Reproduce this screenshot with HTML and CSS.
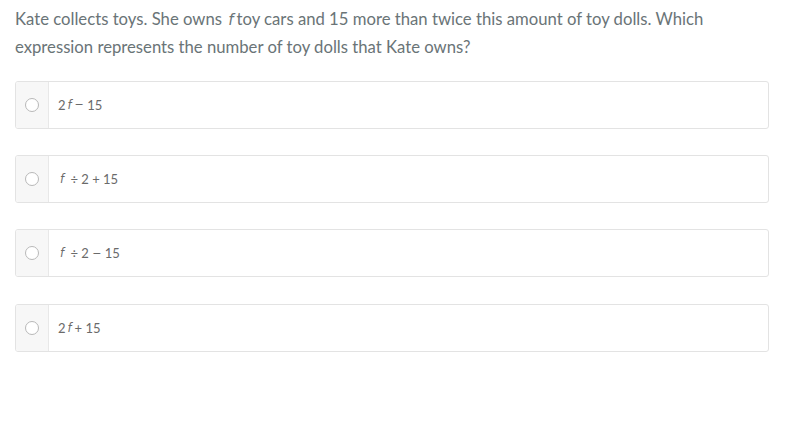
FILE: index.html
```html
<!DOCTYPE html>
<html>
<head>
<meta charset="utf-8">
<link rel="stylesheet" href="styles.css">
</head>
<body>
<div class="page">
  <p class="question">Kate collects toys. She owns <span class="var">f</span>toy cars and 15 more than twice this amount of toy dolls. Which expression represents the number of toy dolls that Kate owns?</p>
  <div class="choices">
    <div class="choice"><div class="radio-cell"><span class="radio"></span></div><div class="label">2<span class="var">f</span><span class="op">−</span> 15</div></div>
    <div class="choice"><div class="radio-cell"><span class="radio"></span></div><div class="label"><span class="var">f</span> ÷ 2 + 15</div></div>
    <div class="choice"><div class="radio-cell"><span class="radio"></span></div><div class="label"><span class="var">f</span> ÷ 2 <span class="op">−</span> 15</div></div>
    <div class="choice"><div class="radio-cell"><span class="radio"></span></div><div class="label">2<span class="var">f</span>+ 15</div></div>
  </div>
</div>
</body>
</html>
```

FILE: styles.css
```css
html, body {
  margin: 0;
  padding: 0;
  background: #ffffff;
}
.page {
  padding: 6px 31px 0 15px;
  font-family: "Lato", "Noto Sans", sans-serif;
  color: #6a7477;
}
.question {
  margin: 0;
  font-size: 16.7px;
  line-height: 27px;
}
.var {
  display: inline-block;
  font-style: italic;
  font-family: "DejaVu Sans", sans-serif;
  padding: 0 3px 0 2px;
}
.question .var {
  font-size: 15px;
}
.op {
  font-family: "DejaVu Sans", sans-serif;
  font-size: 11px;
}
.choices {
  margin-top: 19.5px;
  display: flex;
  flex-direction: column;
  gap: 26.4px;
}
.choice {
  display: flex;
  height: 48px;
  box-sizing: border-box;
  border: 1px solid #e3e3e3;
  border-radius: 3px;
  overflow: hidden;
}
.radio-cell {
  width: 32px;
  background: #f7f7f7;
  border-right: 1px solid #e8e8e8;
  display: flex;
  align-items: center;
  justify-content: center;
}
.radio {
  width: 12px;
  height: 12px;
  border: 1px solid #b8b8b8;
  border-radius: 50%;
  background: #fff;
}
.label {
  display: flex;
  align-items: center;
  padding-left: 9px;
  font-size: 13px;
  color: #6a6a6a;
  white-space: pre;
}
.label .var {
  font-size: 11.5px;
}
```
